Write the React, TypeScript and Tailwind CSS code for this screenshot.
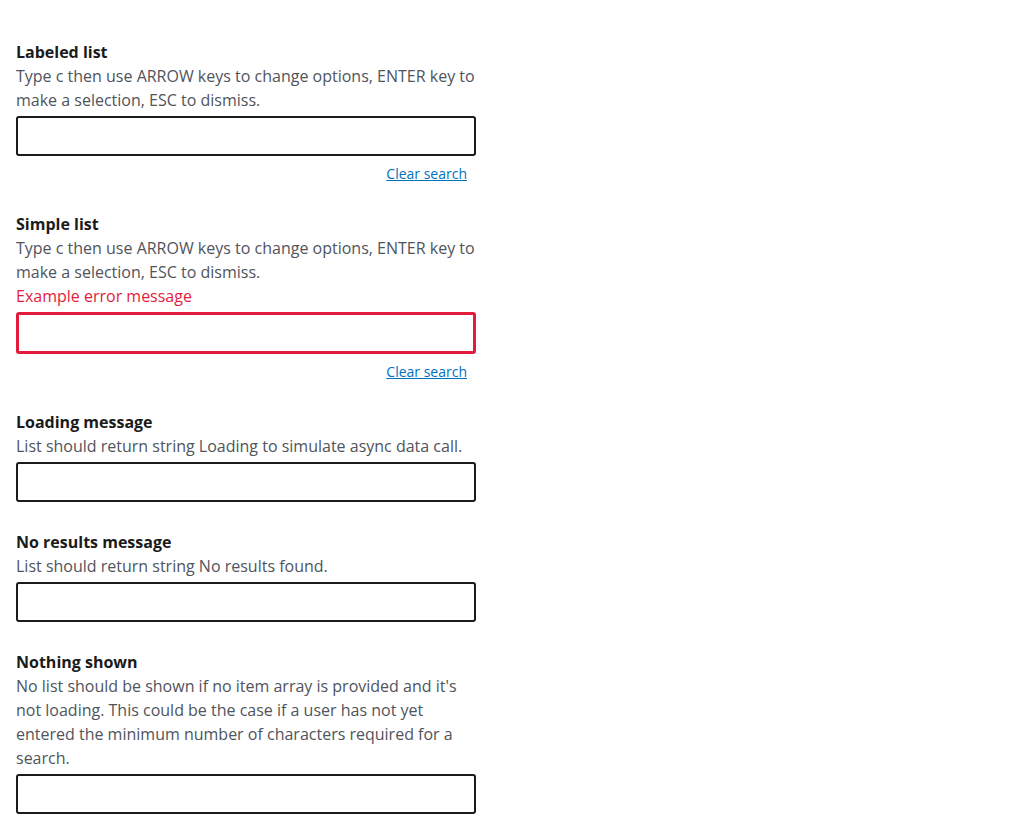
import React from "react";

type Section = {
  title: string;
  desc: string;
  error?: string;
  clear?: boolean;
};

const sections: Section[] = [
  {
    title: "Labeled list",
    desc: "Type c then use ARROW keys to change options, ENTER key to make a selection, ESC to dismiss.",
    clear: true,
  },
  {
    title: "Simple list",
    desc: "Type c then use ARROW keys to change options, ENTER key to make a selection, ESC to dismiss.",
    error: "Example error message",
    clear: true,
  },
  {
    title: "Loading message",
    desc: "List should return string Loading to simulate async data call.",
  },
  {
    title: "No results message",
    desc: "List should return string No results found.",
  },
  {
    title: "Nothing shown",
    desc: "No list should be shown if no item array is provided and it's not loading. This could be the case if a user has not yet entered the minimum number of characters required for a search.",
  },
];

export default function App() {
  return (
    <div
      className="min-h-[834px] w-[1024px] bg-white px-4 pt-[40px]"
      style={{ fontFamily: '"Open Sans", "Noto Sans", sans-serif' }}
    >
      <div className="flex w-[460px] flex-col gap-[28px]">
        {sections.map((s) => (
          <div key={s.title} className="flex flex-col">
            <div className="text-[16px] font-bold leading-[24px] text-[#1b1b1b]">{s.title}</div>
            <div className="text-[16px] leading-[24px] text-[#50545b]">{s.desc}</div>
            {s.error && (
              <div className="text-[16px] leading-[24px] text-[#e31c3d]">{s.error}</div>
            )}
            <input
              type="text"
              className={
                s.error
                  ? "mt-1 h-[42px] w-[460px] rounded-[3px] border-[3px] border-[#e31c3d] bg-white px-2 outline-none"
                  : "mt-1 h-[40px] w-[460px] rounded-[3px] border-2 border-[#1b1b1b] bg-white px-2 outline-none"
              }
            />
            {s.clear && (
              <div className="mt-2 flex justify-end pr-[9px]">
                <a
                  href="#"
                  className="text-[14px] leading-[20px] text-[#0071bc] underline"
                >
                  Clear search
                </a>
              </div>
            )}
          </div>
        ))}
      </div>
    </div>
  );
}
